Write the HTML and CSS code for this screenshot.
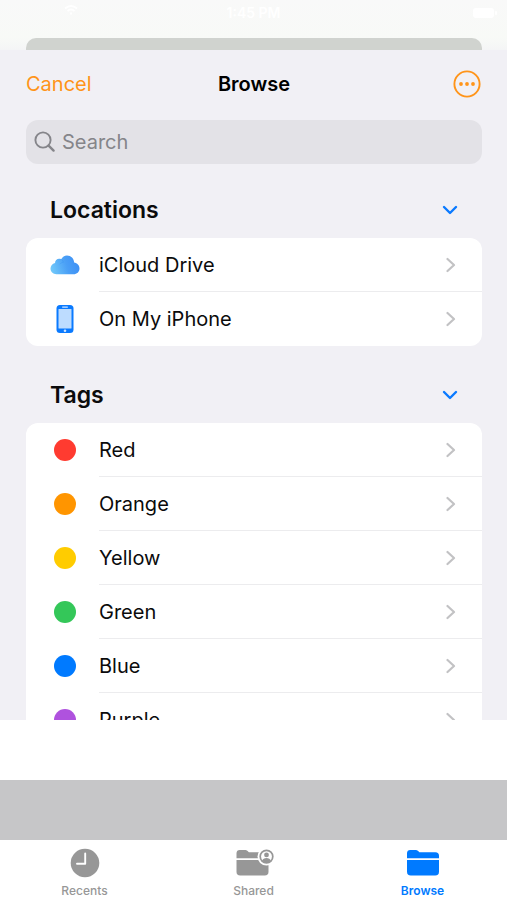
FILE: index.html
```html
<!DOCTYPE html>
<html lang="en">
<head>
<meta charset="utf-8">
<meta name="viewport" content="width=device-width, initial-scale=1">
<title>Browse</title>
<link rel="stylesheet" href="styles.css">
</head>
<body>
<svg class="defs" aria-hidden="true">
  <defs>
    <linearGradient id="cloud-fill" x1="0" y1="0.6" x2="1" y2="0.4">
      <stop offset="0" stop-color="#70c8fa"/>
      <stop offset="0.55" stop-color="#4a9ff6"/>
      <stop offset="1" stop-color="#3d8ff5"/>
    </linearGradient>
    <symbol id="chevron" viewBox="0 0 10 16"><path d="M1.5 2 8 8 1.5 14" fill="none" stroke="currentColor" stroke-width="2.2" stroke-linecap="round" stroke-linejoin="round"/></symbol>
    <symbol id="chevron-down" viewBox="0 0 16 10"><path d="M2 2 8 8 14 2" fill="none" stroke="currentColor" stroke-width="2.4" stroke-linecap="round" stroke-linejoin="round"/></symbol>
  </defs>
</svg>

<div class="status">
  <svg class="wifi" viewBox="0 0 14 12" aria-hidden="true"><path d="M1 4.5Q7-.5 13 4.5M3.5 7Q7 4 10.500 7M6 9.500h2" fill="none" stroke="#fff" stroke-width="1.800"/></svg>
  <span class="time">1:45 PM</span>
  <svg class="battery" viewBox="0 0 24 12" aria-hidden="true"><rect x="0" y="1" width="21" height="10" rx="3" fill="#fff"/><rect x="22" y="4" width="2" height="4" rx="1" fill="#fff"/></svg>
</div>
<div class="backdrop"><div class="back-card"></div></div>

<main class="sheet">
  <header class="navbar">
    <button class="cancel" type="button">Cancel</button>
    <h1>Browse</h1>
    <button class="more" type="button" aria-label="More">
      <svg width="28" height="28" viewBox="0 0 28 28"><circle cx="14" cy="14" r="12.600" fill="none" stroke="currentColor" stroke-width="1.900"/><circle cx="8" cy="14" r="1.900" fill="currentColor"/><circle cx="14" cy="14" r="1.900" fill="currentColor"/><circle cx="20" cy="14" r="1.900" fill="currentColor"/></svg>
    </button>
  </header>

  <label class="search">
    <svg width="22" height="22" viewBox="0 0 22 22" aria-hidden="true"><circle cx="9" cy="9" r="7.600" fill="none" stroke="currentColor" stroke-width="1.900"/><path d="m14.600 14.600 5 5" stroke="currentColor" stroke-width="2.400" stroke-linecap="round"/></svg>
    <input type="search" placeholder="Search" aria-label="Search">
  </label>

  <section>
    <div class="heading">
      <h2>Locations</h2>
      <button type="button" aria-label="Collapse locations"><svg width="16" height="10"><use href="#chevron-down"/></svg></button>
    </div>
    <ul class="card">
      <li><a href="#icloud">
        <span class="icon"><svg width="30" height="20" viewBox="0 0 30 20" aria-hidden="true"><path d="M6.500 19.300C3 19.300.500 16.900.500 13.600c0-2.900 1.900-5.200 4.500-5.700C5 5.300 7 3.600 9.200 3.700c.8 0 1.400.1 2 .5C12.400 1.900 14.500.500 17 .500c4 0 7 3.100 7.100 7 3 .5 5.400 2.900 5.400 6 0 3.400-2.600 5.800-6 5.800z" fill="url(#cloud-fill)"/><path d="M11.200 4.200c1.200.7 2 1.700 2.300 3.100-1.600.1-2.800.8-3.700 1.900" fill="none" stroke="#318af0" stroke-opacity=".35" stroke-width=".8"/></svg></span>
        <span class="row"><span>iCloud Drive</span><svg class="go" width="10" height="16"><use href="#chevron"/></svg></span></a></li>
      <li><a href="#iphone">
        <span class="icon"><svg width="18" height="28" viewBox="0 0 18 28" aria-hidden="true"><rect x=".5" y="0" width="17" height="28" rx="3.500" fill="#0a7aff"/><rect x="2.500" y="4" width="13" height="19.500" rx=".5" fill="#bddcff"/><rect x="6" y="1.500" width="6" height="1.200" rx=".6" fill="#cfe5ff"/><circle cx="9" cy="25.700" r="1.300" fill="#cfe5ff"/></svg></span>
        <span class="row"><span>On My iPhone</span><svg class="go" width="10" height="16"><use href="#chevron"/></svg></span></a></li>
    </ul>
  </section>

  <section>
    <div class="heading">
      <h2>Tags</h2>
      <button type="button" aria-label="Collapse tags"><svg width="16" height="10"><use href="#chevron-down"/></svg></button>
    </div>
    <ul class="card">
      <li><a href="#red"><span class="icon"><i class="dot red"></i></span><span class="row"><span>Red</span><svg class="go" width="10" height="16"><use href="#chevron"/></svg></span></a></li>
      <li><a href="#orange"><span class="icon"><i class="dot orange"></i></span><span class="row"><span>Orange</span><svg class="go" width="10" height="16"><use href="#chevron"/></svg></span></a></li>
      <li><a href="#yellow"><span class="icon"><i class="dot yellow"></i></span><span class="row"><span>Yellow</span><svg class="go" width="10" height="16"><use href="#chevron"/></svg></span></a></li>
      <li><a href="#green"><span class="icon"><i class="dot green"></i></span><span class="row"><span>Green</span><svg class="go" width="10" height="16"><use href="#chevron"/></svg></span></a></li>
      <li><a href="#blue"><span class="icon"><i class="dot blue"></i></span><span class="row"><span>Blue</span><svg class="go" width="10" height="16"><use href="#chevron"/></svg></span></a></li>
      <li><a href="#purple"><span class="icon"><i class="dot purple"></i></span><span class="row"><span>Purple</span><svg class="go" width="10" height="16"><use href="#chevron"/></svg></span></a></li>
    </ul>
  </section>
</main>

<div class="toolbar"></div>
<div class="dimmed"></div>

<nav class="tabs">
  <a href="#recents">
    <svg width="30" height="30" viewBox="0 0 30 30" aria-hidden="true"><circle cx="15" cy="15" r="14.300" fill="currentColor"/><path d="M15.200 5.500V15.700H7" fill="none" stroke="#fff" stroke-width="1.900" stroke-linecap="round" stroke-linejoin="round"/></svg>
    <span>Recents</span>
  </a>
  <a href="#shared">
    <svg width="40" height="30" viewBox="0 0 40 30" aria-hidden="true"><path d="M2.500 10.200V5.300c0-2.100 1.200-3.300 3.200-3.300h5c1.300 0 2 .3 2.900 1.100l1.300 1.100H25v6z" fill="currentColor"/><path d="M2.500 12h32v11.700c0 2.500-1.200 3.800-3.800 3.800H6.300c-2.600 0-3.800-1.300-3.800-3.800z" fill="currentColor"/><circle cx="32.500" cy="8.600" r="9" fill="#fff"/><circle cx="32.500" cy="8.600" r="6.300" fill="#fff" stroke="currentColor" stroke-width="1.700"/><circle cx="32.500" cy="6.900" r="2.400" fill="currentColor"/><path d="M28.100 12.700c.8-2 2.200-2.800 4.400-2.800s3.600.8 4.400 2.800c-1.200 1.300-2.700 1.900-4.400 1.900s-3.200-.6-4.400-1.900z" fill="currentColor"/></svg>
    <span>Shared</span>
  </a>
  <a class="active" href="#browse" aria-current="page">
    <svg width="34" height="30" viewBox="0 0 34 30" aria-hidden="true"><path d="M1 10.200V5.300C1 3.200 2.200 2 4.200 2h5c1.300 0 2 .3 2.900 1.100l1.300 1.100h16c2.400 0 3.600 1.200 3.600 3.600v2.400z" fill="currentColor"/><path d="M1 12h32v11.700c0 2.500-1.200 3.800-3.800 3.800H4.800C2.200 27.500 1 26.200 1 23.700z" fill="currentColor"/></svg>
    <span>Browse</span>
  </a>
</nav>
</body>
</html>
```
FILE: styles.css
```css
* {
  box-sizing: border-box;
}

body {
  margin: 0;
  height: 100vh;
  display: flex;
  flex-direction: column;
  overflow: hidden;
  background: #fff;
  color: #0b0b0c;
  font-family: Inter, "Liberation Sans", sans-serif;
}

button {
  display: flex;
  padding: 0;
  border: 0;
  background: none;
  font: inherit;
}

h1,
h2,
ul {
  margin: 0;
  padding: 0;
}

a {
  color: inherit;
  text-decoration: none;
}

svg {
  flex: none;
}

.defs {
  position: absolute;
  width: 0;
  height: 0;
}

.status {
  flex: none;
  display: grid;
  grid-template-columns: 1fr auto 1fr;
  height: 38px;
  padding: 4px 10px 0;
  background: linear-gradient(#f9f9f9, #f8faf7);
  color: #fff;
  font-size: 14px;
  font-weight: 600;
  line-height: 18px;
}

.wifi {
  width: 14px;
  height: 12px;
  margin-left: 54px;
}

.battery {
  justify-self: end;
  width: 24px;
  height: 18px;
}

.backdrop {
  flex: none;
  padding: 0 25px 0 26px;
  background: linear-gradient(#f8faf7, #f4f5f6);
}

.back-card {
  height: 12px;
  border-radius: 10px 10px 0 0;
  background: #d0d3cf;
}

.sheet {
  flex: 1;
  min-height: 0;
  overflow: hidden;
  padding: 0 25px 0 26px;
  background: #f1f0f5;
}

.navbar {
  display: grid;
  grid-template-columns: 1fr auto 1fr;
  align-items: center;
  height: 70px;
  padding-bottom: 2px;
}

h1 {
  color: #000;
  font-size: 20px;
  font-weight: 600;
  line-height: 28px;
}

.cancel,
.more {
  color: #ff9419;
}

.cancel {
  font-size: 20px;
  line-height: 28px;
}

.more {
  justify-self: end;
  margin-right: 1px;
}

.search {
  display: flex;
  align-items: center;
  gap: 6px;
  height: 44px;
  padding: 0 8px;
  border-radius: 12px;
  background: #e3e2e7;
  color: #85858a;
}

.search input {
  flex: 1;
  min-width: 0;
  padding: 0;
  border: 0;
  outline: 0;
  background: none;
  color: #0b0b0c;
  font: inherit;
  font-size: 20px;
}

.search input::placeholder {
  color: #85858a;
}

section {
  padding-top: 18px;
}

section + section {
  padding-top: 21px;
}

.heading {
  display: flex;
  align-items: center;
  justify-content: space-between;
  height: 56px;
  padding: 0 24px;
}

h2 {
  font-size: 23px;
  font-weight: 600;
  line-height: 32px;
}

.heading button {
  color: #0a7aff;
}

.card {
  overflow: hidden;
  border-radius: 12px;
  background: #fff;
  list-style: none;
}

.card a {
  display: flex;
  height: 54px;
}

.icon {
  flex: none;
  display: flex;
  align-items: center;
  justify-content: center;
  width: 77px;
}

.icon + .row {
  margin-left: -4px;
}

.row {
  flex: 1;
  display: flex;
  align-items: center;
  justify-content: space-between;
  padding-right: 26px;
  border-bottom: 1px solid #ececee;
  font-size: 20px;
  line-height: 28px;
}

.card li:last-child .row {
  border-bottom-color: transparent;
}

.go {
  color: #c2c2c4;
}

.dot {
  width: 22px;
  height: 22px;
  border-radius: 50%;
}

.red { background: #ff3b30; }
.orange { background: #ff9500; }
.yellow { background: #ffcc00; }
.green { background: #34c759; }
.blue { background: #007aff; }
.purple { background: #af52de; }

.toolbar {
  flex: none;
  height: 60px;
  background: #fff;
}

.dimmed {
  flex: none;
  height: 60px;
  background: #c6c6c8;
}

.tabs {
  flex: none;
  display: grid;
  grid-template-columns: repeat(3, 1fr);
  height: 60px;
  padding-top: 8px;
  background: #fff;
}

.tabs a {
  display: flex;
  flex-direction: column;
  align-items: center;
  gap: 4px;
  color: #979797;
  font-size: 12px;
  font-weight: 500;
  line-height: 18px;
}

.tabs .active {
  color: #007aff;
  font-weight: 600;
}
```
